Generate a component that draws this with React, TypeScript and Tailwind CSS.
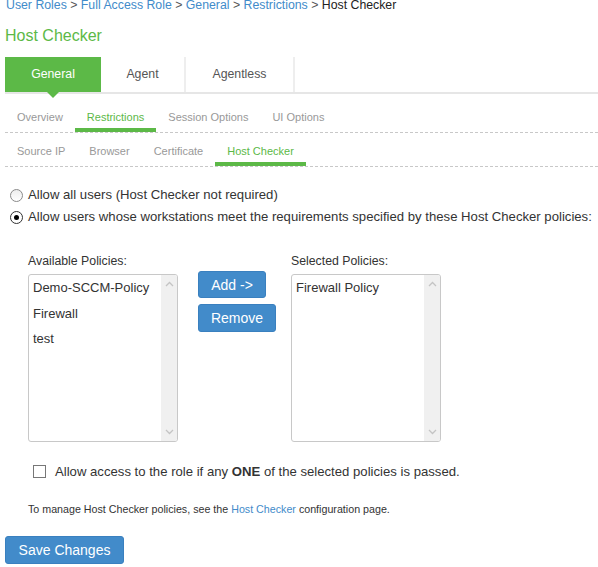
import React from "react";

const GREEN = "text-[#5cb947]";

function ScrollTrack() {
  return (
    <div className="w-[16px] bg-[#f0f0f0] flex flex-col items-center justify-between py-[6px]">
      <svg width="9" height="6" viewBox="0 0 9 6">
        <polyline points="1,5 4.5,1.5 8,5" fill="none" stroke="#c4c4c4" strokeWidth="1.3" />
      </svg>
      <svg width="9" height="6" viewBox="0 0 9 6">
        <polyline points="1,1 4.5,4.5 8,1" fill="none" stroke="#c4c4c4" strokeWidth="1.3" />
      </svg>
    </div>
  );
}

function ListBox({ items }: { items: string[] }) {
  return (
    <div className="w-[150px] h-[168px] border border-[#c8c8c8] rounded-[3px] flex overflow-hidden bg-white">
      <div className="flex-1 pl-[4px] text-[13px] leading-[25.5px] text-[#333]">
        {items.map((it) => (
          <div key={it} className="whitespace-nowrap">{it}</div>
        ))}
      </div>
      <ScrollTrack />
    </div>
  );
}

function SubTab({ label, active }: { label: string; active?: boolean }) {
  return (
    <div className="flex flex-col px-[12px]">
      <div className={`leading-[14px] pb-[4px] whitespace-nowrap ${active ? GREEN : "text-[#999]"}`}>{label}</div>
      <div className={`h-[4px] -mx-[12px] ${active ? "bg-[#5cb947]" : ""}`} />
    </div>
  );
}

export default function App() {
  const sep = <span className="text-[#555]"> &gt; </span>;
  return (
    <div className="w-[598px] h-[567px] bg-white overflow-hidden font-['Liberation_Sans',Arial,sans-serif] text-[#333]">
      {/* breadcrumb */}
      <div className="-mt-[1px] pl-[6px] text-[12.3px] leading-[13px] whitespace-nowrap">
        <span className="text-[#428bca]">User Roles</span>
        {sep}
        <span className="text-[#428bca]">Full Access Role</span>
        {sep}
        <span className="text-[#428bca]">General</span>
        {sep}
        <span className="text-[#428bca]">Restrictions</span>
        {sep}
        <span className="text-[#222]">Host Checker</span>
      </div>

      {/* title */}
      <div className={`mt-[14px] pl-[5px] text-[16px] leading-[20px] ${GREEN}`}>Host Checker</div>

      {/* main tabs */}
      <div className="mt-[11px] ml-[5px] flex border-b-2 border-[#e6e6e6] text-[12.3px]">
        <div className="relative w-[96px] h-[35px] bg-[#5cb947] text-white flex items-center justify-center">
          General
          <div className="absolute left-[42px] top-[35px] w-0 h-0 border-l-[6px] border-r-[6px] border-t-[6px] border-l-transparent border-r-transparent border-t-[#5cb947]" />
        </div>
        <div className="w-[85px] h-[35px] border-r-2 border-[#eeeeee] text-[#555] flex items-center justify-center">Agent</div>
        <div className="w-[109px] h-[35px] border-r-2 border-[#eeeeee] text-[#555] flex items-center justify-center">Agentless</div>
      </div>

      {/* sub tabs row 1 */}
      <div className="ml-[5px] flex border-b border-dashed border-[#c8c8c8] text-[11px] pt-[16px]">
        <SubTab label="Overview" />
        <SubTab label="Restrictions" active />
        <SubTab label="Session Options" />
        <SubTab label="UI Options" />
      </div>

      {/* sub tabs row 2 */}
      <div className="ml-[5px] flex border-b border-dashed border-[#c8c8c8] text-[11px] pt-[11px]">
        <SubTab label="Source IP" />
        <SubTab label="Browser" />
        <SubTab label="Certificate" />
        <SubTab label="Host Checker" active />
      </div>

      {/* radios */}
      <div className="mt-[17px] text-[13.15px]">
        <div className="h-[22px] flex items-center pl-[10px]">
          <div className="w-[13px] h-[13px] rounded-full border border-[#8a8a8a] bg-gradient-to-b from-[#ededed] to-white" />
          <span className="ml-[5px] whitespace-nowrap">Allow all users (Host Checker not required)</span>
        </div>
        <div className="h-[22px] flex items-center pl-[10px]">
          <div className="w-[13px] h-[13px] rounded-full border border-[#333] bg-white flex items-center justify-center">
            <div className="w-[5px] h-[5px] rounded-full bg-black" />
          </div>
          <span className="ml-[5px] whitespace-nowrap">Allow users whose workstations meet the requirements specified by these Host Checker policies:</span>
        </div>
      </div>

      {/* policies */}
      <div className="mt-[26px] pl-[28px] flex">
        <div className="w-[150px]">
          <div className="text-[12.3px] leading-[15px] mb-[5px]">Available Policies:</div>
          <ListBox items={["Demo-SCCM-Policy", "Firewall", "test"]} />
        </div>
        <div className="w-[113px] pl-[20px] pt-[17px] flex flex-col items-start gap-[6px]">
          <button className="w-[68px] h-[27px] rounded-[3px] bg-[#428bca] border border-[#3a80bf] text-white text-[14px] leading-none">Add -&gt;</button>
          <button className="w-[78px] h-[28px] rounded-[3px] bg-[#428bca] border border-[#3a80bf] text-white text-[14px] leading-none">Remove</button>
        </div>
        <div className="w-[150px]">
          <div className="text-[12.3px] leading-[15px] mb-[5px]">Selected Policies:</div>
          <ListBox items={["Firewall Policy"]} />
        </div>
      </div>

      {/* checkbox */}
      <div className="mt-[22px] pl-[33px] flex items-center text-[13.15px] leading-[15px]">
        <div className="w-[13px] h-[13px] border border-[#777] bg-white" />
        <span className="ml-[9px] whitespace-nowrap">
          Allow access to the role if any <b className="font-bold">ONE</b> of the selected policies is passed.
        </span>
      </div>

      {/* footer */}
      <div className="mt-[24px] pl-[28px] text-[10.7px] leading-[13px] whitespace-nowrap">
        To manage Host Checker policies, see the <span className="text-[#428bca]">Host Checker</span> configuration page.
      </div>

      <div className="mt-[20px] pl-[5px]">
        <button className="w-[119px] h-[28px] rounded-[3px] bg-[#428bca] border border-[#3a80bf] text-white text-[14px] leading-none">Save Changes</button>
      </div>
    </div>
  );
}
